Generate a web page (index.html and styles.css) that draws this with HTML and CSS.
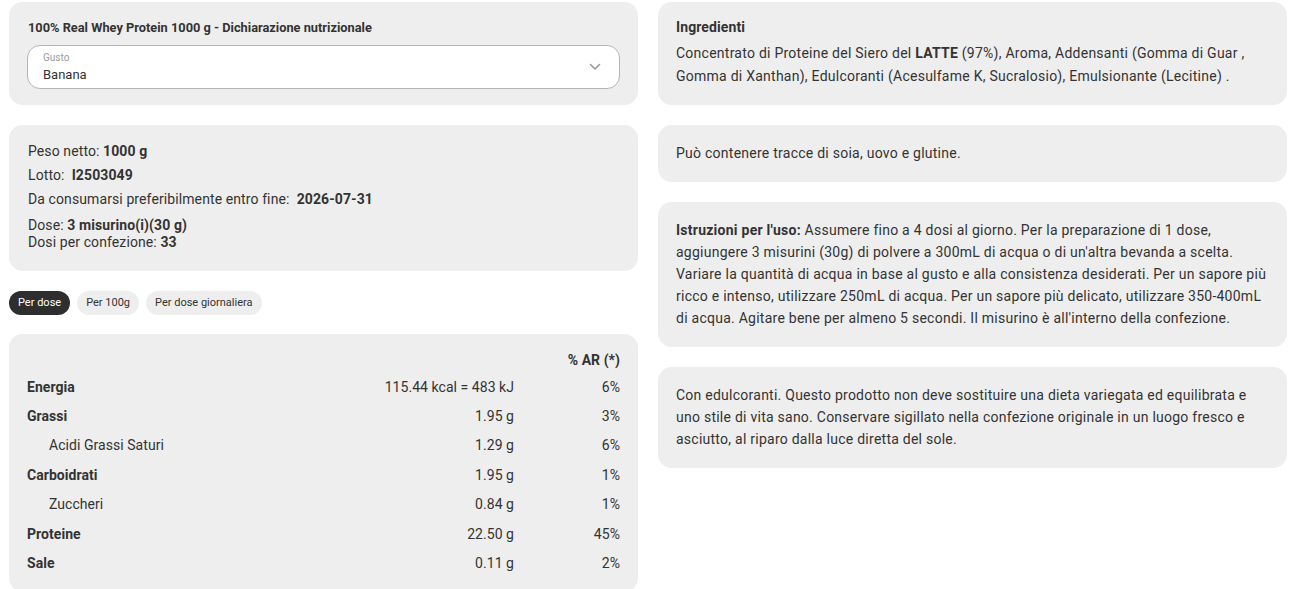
FILE: index.html
```html
<!DOCTYPE html>
<html lang="it">
<head>
<meta charset="utf-8">
<title>Dichiarazione nutrizionale</title>
<link rel="stylesheet" href="styles.css">
</head>
<body>
<div class="page">
  <div class="col">
    <section class="card card-head">
      <h2 class="card-title">100% Real Whey Protein 1000 g - Dichiarazione nutrizionale</h2>
      <div class="select">
        <div class="select-text">
          <span class="select-label">Gusto</span>
          <span class="select-value">Banana</span>
        </div>
        <svg class="chev" width="12" height="8" viewBox="0 0 12 8"><path d="M1.5 1.5 L6 6 L10.5 1.5" fill="none" stroke="#9a9a9a" stroke-width="1.6" stroke-linecap="round" stroke-linejoin="round"/></svg>
      </div>
    </section>

    <section class="card card-info">
      <p class="info">Peso netto: <b>1000 g</b></p>
      <p class="info">Lotto:&nbsp; <b>I2503049</b></p>
      <p class="info info-3">Da consumarsi preferibilmente entro fine:&nbsp; <b>2026-07-31</b></p>
      <p class="info info-last">Dose: <b>3 misurino(i)(30 g)</b><br>Dosi per confezione: <b>33</b></p>
    </section>

    <div class="pills">
      <span class="pill pill-active">Per dose</span>
      <span class="pill">Per 100g</span>
      <span class="pill">Per dose giornaliera</span>
    </div>

    <section class="card card-table">
      <table class="nt">
        <thead>
          <tr><th></th><th></th><th class="pct">% AR (*)</th></tr>
        </thead>
        <tbody>
          <tr><td class="main">Energia</td><td class="val">115.44 kcal = 483 kJ</td><td class="pct">6%</td></tr>
          <tr><td class="main">Grassi</td><td class="val">1.95 g</td><td class="pct">3%</td></tr>
          <tr><td class="sub">Acidi Grassi Saturi</td><td class="val">1.29 g</td><td class="pct">6%</td></tr>
          <tr><td class="main">Carboidrati</td><td class="val">1.95 g</td><td class="pct">1%</td></tr>
          <tr><td class="sub">Zuccheri</td><td class="val">0.84 g</td><td class="pct">1%</td></tr>
          <tr><td class="main">Proteine</td><td class="val">22.50 g</td><td class="pct">45%</td></tr>
          <tr><td class="main">Sale</td><td class="val">0.11 g</td><td class="pct">2%</td></tr>
        </tbody>
      </table>
    </section>
  </div>

  <div class="col">
    <section class="card card-ing">
      <h3 class="ing-title">Ingredienti</h3>
      <p class="text">Concentrato di Proteine del Siero del <b>LATTE</b> (97%), Aroma, Addensanti (Gomma di Guar , Gomma di Xanthan), Edulcoranti (Acesulfame K, Sucralosio), Emulsionante (Lecitine) .</p>
    </section>
    <section class="card card-short">
      <p class="text">Può contenere tracce di soia, uovo e glutine.</p>
    </section>
    <section class="card card-long">
      <p class="text"><b>Istruzioni per l'uso:</b> Assumere fino a 4 dosi al giorno. Per la preparazione di 1 dose, aggiungere 3 misurini (30g) di polvere a 300mL di acqua o di un'altra bevanda a scelta. Variare la quantità di acqua in base al gusto e alla consistenza desiderati. Per un sapore più ricco e intenso, utilizzare 250mL di acqua. Per un sapore più delicato, utilizzare 350-400mL di acqua. Agitare bene per almeno 5 secondi. Il misurino è all'interno della confezione.</p>
    </section>
    <section class="card card-long">
      <p class="text">Con edulcoranti. Questo prodotto non deve sostituire una dieta variegata ed equilibrata e uno stile di vita sano. Conservare sigillato nella confezione originale in un luogo fresco e asciutto, al riparo dalla luce diretta del sole.</p>
    </section>
  </div>
</div>
</body>
</html>
```
FILE: styles.css
```css
* { box-sizing: border-box; }
html, body { margin: 0; padding: 0; background: #fff; }
body {
  font-family: Roboto, "Liberation Sans", sans-serif;
  color: #333333;
  font-size: 14px;
  letter-spacing: 0.25px;
}
.page {
  display: grid;
  grid-template-columns: 629px 629px;
  column-gap: 20px;
  padding: 2px 0 0 9px;
}
.col {
  display: flex;
  flex-direction: column;
  gap: 20px;
}
.card {
  background: #eeeeee;
  border-radius: 14px;
}
.card-head {
  height: 103px;
  padding: 18px 18px 0 18px;
}
.card-title {
  margin: 0 0 9px 1px;
  font-size: 12.8px;
  font-weight: 700;
  line-height: 16px;
  letter-spacing: 0;
}
.select {
  height: 44px;
  background: #fff;
  border: 1px solid #b5b5b5;
  border-radius: 13px;
  display: flex;
  align-items: center;
  justify-content: space-between;
  padding: 0 18px 0 15px;
}
.select-text { display: flex; flex-direction: column; }
.select-label { font-size: 10px; color: #9a9a9a; line-height: 12px; letter-spacing: 0; }
.select-value { font-size: 13px; line-height: 17px; margin-top: 2px; letter-spacing: 0; }
.chev { display: block; }

.card-info {
  padding: 18px 19px 20px 19px;
  letter-spacing: 0.1px;
}
.info {
  margin: 0 0 7px 0;
  line-height: 17px;
}
.info-3 { margin-bottom: 9px; }
.info-last { margin: 0; }
.info b { font-weight: 700; }

.pills {
  display: flex;
  gap: 7px;
}
.pill {
  height: 24px;
  line-height: 24px;
  padding: 0 9px;
  border-radius: 12px;
  background: #eeeeee;
  font-size: 11px;
  color: #333;
  letter-spacing: 0;
}
.pill-active { background: #2e2e2e; color: #fff; }

.card-table {
  padding: 13px 18px 14px 18px;
  margin-top: -1px;
  letter-spacing: 0.05px;
}
.nt {
  width: 100%;
  border-collapse: collapse;
}
.nt th { font-weight: 700; height: 25px; padding: 0; text-align: right; }
.nt td { height: 29.4px; padding: 0; }
.nt .main { font-weight: 700; }
.nt .sub { padding-left: 22px; }
.nt .val { text-align: right; width: 200px; }
.nt .pct { text-align: right; width: 106px; }

.card-ing { padding: 16px 18px 17px 18px; }
.ing-title { margin: 0 0 6px 0; font-size: 14px; font-weight: 700; line-height: 18px; letter-spacing: 0.1px; }
.text { margin: 0; line-height: 23px; }
.card-short { padding: 18px 18px 19px 18px; }
.card-short .text { line-height: 20px; }
.card-long { padding: 17px 18px 18px 18px; }
.card-long .text { line-height: 22px; }
```
